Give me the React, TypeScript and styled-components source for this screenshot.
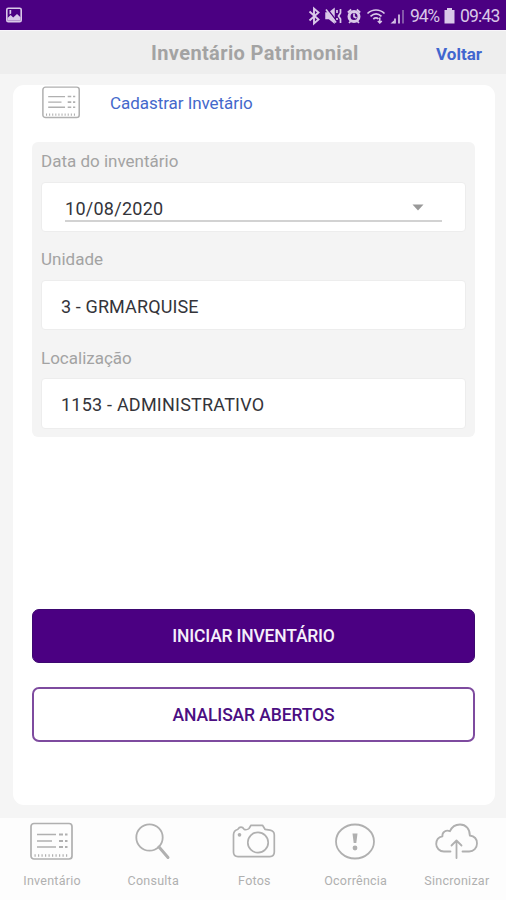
import React from "react";
import styled, { createGlobalStyle } from "styled-components";

const GlobalStyle = createGlobalStyle`
  *, *::before, *::after { box-sizing: border-box; }
  body { margin: 0; background: #f5f5f5; font-family: Roboto, "Liberation Sans", sans-serif; }
  button { font-family: inherit; margin: 0; padding: 0; }
`;

const Screen = styled.div`
  width: 506px;
  height: 900px;
  display: flex;
  flex-direction: column;
  background: #f5f5f5;
  overflow: hidden;
`;

const StatusBar = styled.div`
  height: 30px;
  flex: none;
  display: flex;
  align-items: center;
  padding: 1px 6px 0;
  background: #4b0082;
  color: #d9c8e8;
`;

const StatusIcons = styled.div`
  flex: 1;
  display: flex;
  justify-content: flex-end;
  margin-right: 5px;
`;

const StatusText = styled.span<{ $width: number; $spacing: number }>`
  width: ${(p) => p.$width}px;
  font-size: 17.5px;
  line-height: 30px;
  letter-spacing: ${(p) => p.$spacing}px;
  white-space: nowrap;
`;

const Header = styled.header`
  height: 44px;
  flex: none;
  display: grid;
  grid-template-columns: 1fr 204px 1fr;
  align-items: center;
  background: #eeeeee;
  border-top: 1px solid #f8f5fa;
`;

const Title = styled.h1`
  grid-column: 2;
  margin: 0;
  font-size: 20px;
  line-height: 44px;
  font-weight: 700;
  letter-spacing: 0.38px;
  color: #a3a3a3;
  white-space: nowrap;
`;

const BackLink = styled.button`
  justify-self: end;
  margin: 1px 24px 0 0;
  border: 0;
  background: none;
  color: #4166cf;
  font-size: 17px;
  font-weight: 700;
`;

const Card = styled.main`
  height: 720px;
  flex: none;
  margin: 11px 11px 13px 13px;
  padding: 0 20px 0 19px;
  display: flex;
  flex-direction: column;
  border-radius: 11px;
  background: #fff;
`;

const CardHead = styled.div`
  height: 57px;
  display: flex;
  align-items: flex-start;
  padding-left: 10px;
`;

const CardTitle = styled.h2`
  margin: 4px 0 0 29px;
  font-size: 17px;
  line-height: 28px;
  font-weight: 400;
  letter-spacing: -0.05px;
  color: #4468cb;
  white-space: nowrap;
`;

const Form = styled.form`
  height: 295px;
  padding: 0 9px;
  border-radius: 6px;
  background: #f4f4f4;
`;

const Field = styled.label`
  display: block;
  height: 98.4px;
`;

const Label = styled.span`
  display: block;
  height: 39.5px;
  font-size: 17px;
  line-height: 38px;
  color: #a3a3a3;
`;

const FieldBox = styled.span<{ $inset?: boolean }>`
  display: flex;
  height: 50.5px;
  padding: ${(p) => (p.$inset ? "0 23px 9px" : "0 19px")};
  border: 1px solid #ededed;
  border-radius: 4px;
  background: #fff;
`;

const Value = styled.span<{ $spacing: number }>`
  font-size: 18px;
  line-height: 51px;
  letter-spacing: ${(p) => p.$spacing}px;
  color: #34343a;
  white-space: nowrap;
`;

const DateSelect = styled.span`
  flex: 1;
  display: flex;
  justify-content: space-between;
  border-bottom: 2px solid #d2d2d2;
`;

const Caret = styled.svg`
  margin: 21px 18px 0 0;
`;

const Actions = styled.div`
  display: flex;
  flex-direction: column;
  gap: 24px;
  margin-top: 172px;
`;

const ActionButton = styled.button<{ $filled?: boolean }>`
  height: ${(p) => (p.$filled ? 54 : 55)}px;
  border: ${(p) => (p.$filled ? "1px solid #3d0870" : "2px solid #7e4b9f")};
  border-radius: 7px;
  background: ${(p) => (p.$filled ? "#4b0082" : "#fff")};
  color: ${(p) => (p.$filled ? "#f5effa" : "#4b0f82")};
  font-size: 17.5px;
  font-weight: 500;
  letter-spacing: ${(p) => (p.$filled ? -0.2 : -0.12)}px;
`;

const TabBar = styled.nav`
  flex: 1;
  display: grid;
  grid-template-columns: repeat(5, 101.2px);
  padding-top: 3px;
  background: #fdfdfd;
`;

const Tab = styled.button`
  display: flex;
  flex-direction: column;
  align-items: center;
  border: 0;
  padding: 0 0 0 3px;
  background: none;
  color: #b0b0b0;
`;

const TabLabel = styled.span`
  margin-top: 9px;
  font-size: 12.5px;
  line-height: 18px;
  letter-spacing: 0.25px;
  white-space: nowrap;
`;

const ListIcon = ({ width, height }: { width: number; height: number }) => (
  <svg width={width} height={height} viewBox="0 0 44 42" preserveAspectRatio="none" fill="none" stroke="#b0b0b0">
    <rect x="1" y="2.5" width="41" height="35.5" rx="3" strokeWidth="1.7" />
    <path d="M7 13.500h19M7 20h15M7 26h19" strokeWidth="1.600" />
    <path d="M29 13.500h4M35 13.500h2.500M29 20h4M35 20h2.500M29 26h4M35 26h2.500" strokeWidth="1.800" />
    <path d="M4.500 34.500h35" strokeWidth="2.600" strokeDasharray="1.200 2.300" />
  </svg>
);

const SearchIcon = () => (
  <svg width="44" height="42" viewBox="0 0 44 42" fill="none" stroke="#b0b0b0">
    <circle cx="18.500" cy="16.500" r="13.200" strokeWidth="1.800" />
    <path d="M28 26l9 10.500" strokeWidth="3" strokeLinecap="round" />
  </svg>
);

const CameraIcon = () => (
  <svg width="44" height="42" viewBox="0 0 44 42" fill="none" stroke="#b0b0b0" strokeWidth="1.700" strokeLinejoin="round">
    <path d="M1.500 14c0-3.500 1.500-5 4.500-5.800 1.500-2.700 4.500-2.700 6 0 1.500.8 4 .3 5-.7l2-3.200h11.500l2.500 4 5 .8c2.800.5 4.300 2 4.300 5v17c0 3-1.500 4.500-4.500 4.500H6c-3 0-4.500-1.500-4.500-4.500z" />
    <circle cx="26" cy="21.500" r="10.200" />
    <circle cx="7.500" cy="13.800" r="1" fill="#b0b0b0" />
  </svg>
);

const AlertIcon = () => (
  <svg width="44" height="42" viewBox="0 0 44 42" fill="none" stroke="#b0b0b0">
    <ellipse cx="21" cy="20.500" rx="19" ry="17" strokeWidth="1.800" />
    <path d="M18.500 12.500h5l-1.200 9.500h-2.600z" fill="#b0b0b0" stroke="none" />
    <circle cx="21" cy="27" r="2.400" fill="#b0b0b0" stroke="none" />
  </svg>
);

const CloudIcon = () => (
  <svg width="44" height="42" viewBox="0 0 44 42" fill="none" stroke="#b0b0b0" strokeWidth="1.800" strokeLinecap="round" strokeLinejoin="round">
    <path d="M15.500 30.500H9c-4.500 0-7.800-3.500-7.800-7.500 0-4 2.500-7 6.200-7.700C7 11 11 8.500 15 10.200 17 5.500 20.500 3.500 25 3.500c6 0 10 4.500 9.800 11 4.500.5 7.200 3.700 7.200 8 0 4.500-3.300 8-7.800 8H27.500" />
    <path d="M21.500 37V20M16.500 24.500l5-5 5 5" />
  </svg>
);

const PictureIcon = () => (
  <svg width="17" height="17" viewBox="0 0 17 17">
    <rect x=".8" y="1.300" width="14.400" height="13.500" rx="1.500" fill="#4b0082" stroke="#d9c8e8" strokeWidth="1.600" />
    <path d="M1.500 13.800V11l3.200-3 2.500 2.500L11 7l3.500 3.200v3.600z" fill="#d9c8e8" />
    <path d="M3.500 3v4.500l1.700-1V3z" fill="#d9c8e8" />
  </svg>
);

const StatusGlyphs = () => (
  <svg width="98" height="20" viewBox="308 5 98 20" fill="none" stroke="#d9c8e8" strokeWidth="1.500">
    <path d="M310.500 10.500l9 8-4.500 4v-15l4.500 4-9 8" strokeWidth="1.900" />
    <path d="M327 12h3l5-4v13.500l-5-4h-3z" fill="#d9c8e8" />
    <path d="M328 7.500l10 13" stroke="#4b0082" strokeWidth="1.500" />
    <path d="M327 8.500l10 13" strokeWidth="1.700" />
    <path d="M338 9v3M341.500 8v4l-2 3 2 3v4M338 17v2" strokeWidth="1.700" />
    <circle cx="355" cy="15.500" r="5" strokeWidth="3" />
    <path d="M355 12.500v3.300l2.500 1.200M348.800 11.500l3.400-3M361.200 11.500l-3.400-3M350 22l1.800-1.800M360 22l-1.800-1.800" strokeWidth="1.700" />
    <path d="M368.500 12.500c5-4.700 12-4.700 17 0M371.500 15.300c3.600-3.100 7.500-3.100 11 0M374.300 18c1.800-1.500 3.600-1.500 5.200 0" strokeWidth="1.700" />
    <path d="M380.800 16.500v5.500M378.800 20l2 2 2-2" strokeWidth="1.500" />
    <path d="M391.500 22.500l4-3.500v3.500z" fill="#d9c8e8" stroke="none" />
    <path d="M396 22.500v-5M400 22.500v-9" strokeWidth="1.700" />
    <path d="M404 22.500V9" stroke="#9674b4" strokeWidth="1.500" />
  </svg>
);

const BatteryIcon = () => (
  <svg width="11" height="16" viewBox="0 0 11 16" fill="#d9c8e8">
    <path d="M3 0h5v2h2.500v13.500H.5V2H3z" />
  </svg>
);

const BatterySlot = styled.span`
  display: flex;
  width: 16px;
`;

const tabs = [
  { label: "Inventário", icon: <ListIcon width={44} height={42} /> },
  { label: "Consulta", icon: <SearchIcon /> },
  { label: "Fotos", icon: <CameraIcon /> },
  { label: "Ocorrência", icon: <AlertIcon /> },
  { label: "Sincronizar", icon: <CloudIcon /> },
];

export default function App() {
  return (
    <>
      <GlobalStyle />
      <Screen>
        <StatusBar>
          <PictureIcon />
          <StatusIcons>
            <StatusGlyphs />
          </StatusIcons>
          <StatusText $width={34} $spacing={-1.2}>94%</StatusText>
          <BatterySlot>
            <BatteryIcon />
          </BatterySlot>
          <StatusText $width={40} $spacing={-0.8}>09:43</StatusText>
        </StatusBar>
        <Header>
          <Title>Inventário Patrimonial</Title>
          <BackLink>Voltar</BackLink>
        </Header>
        <Card>
          <CardHead>
            <ListIcon width={39} height={36} />
            <CardTitle>Cadastrar Invetário</CardTitle>
          </CardHead>
          <Form>
            <Field>
              <Label>Data do inventário</Label>
              <FieldBox $inset>
                <DateSelect>
                  <Value $spacing={0.26}>10/08/2020</Value>
                  <Caret width="12" height="7" viewBox="0 0 12 7">
                    <path d="M.5 .5h11L6 6.500z" fill="#999" />
                  </Caret>
                </DateSelect>
              </FieldBox>
            </Field>
            <Field>
              <Label>Unidade</Label>
              <FieldBox>
                <Value $spacing={0.12}>3 - GRMARQUISE</Value>
              </FieldBox>
            </Field>
            <Field>
              <Label>Localização</Label>
              <FieldBox>
                <Value $spacing={0.22}>1153 - ADMINISTRATIVO</Value>
              </FieldBox>
            </Field>
          </Form>
          <Actions>
            <ActionButton $filled>INICIAR INVENTÁRIO</ActionButton>
            <ActionButton>ANALISAR ABERTOS</ActionButton>
          </Actions>
        </Card>
        <TabBar>
          {tabs.map((tab) => (
            <Tab key={tab.label}>
              {tab.icon}
              <TabLabel>{tab.label}</TabLabel>
            </Tab>
          ))}
        </TabBar>
      </Screen>
    </>
  );
}
